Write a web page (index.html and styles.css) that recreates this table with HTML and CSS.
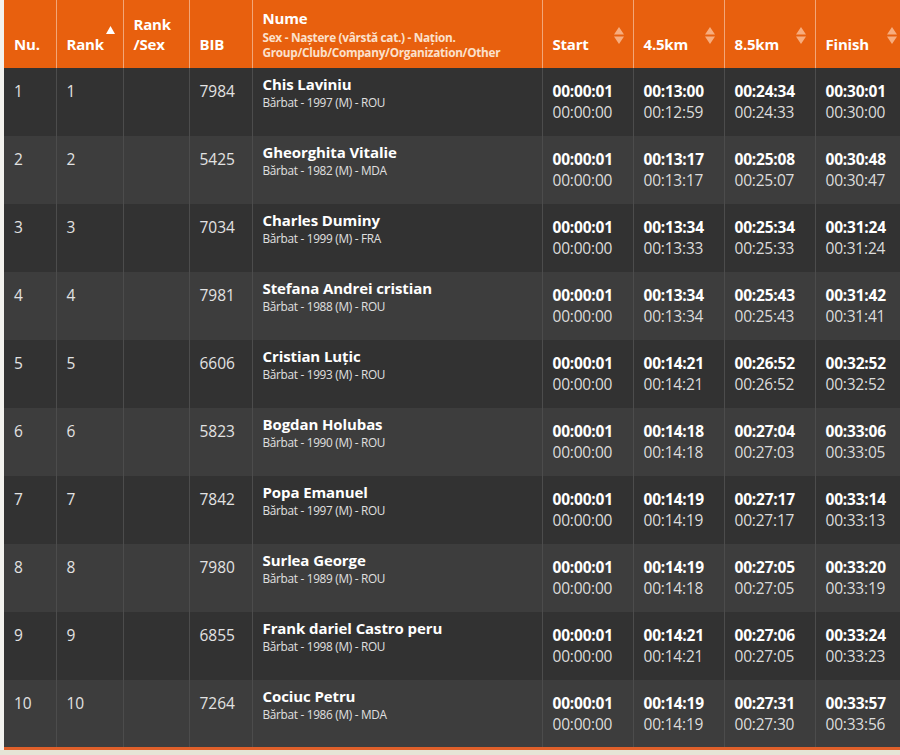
FILE: index.html
```html
<!DOCTYPE html>
<html lang="ro">
<head>
<meta charset="utf-8">
<title>Rezultate</title>
<link rel="stylesheet" href="styles.css">
</head>
<body>
<div class="wrap">
<table class="results">
  <colgroup>
    <col class="c-nu"><col class="c-rank"><col class="c-rs"><col class="c-bib"><col class="c-name">
    <col class="c-t"><col class="c-t"><col class="c-t"><col class="c-t">
  </colgroup>
  <thead>
    <tr>
      <th>Nu.</th>
      <th>Rank<svg class="sort-up" width="9" height="8" viewBox="0 0 9 8"><path d="M4.5 0 L9 8 L0 8 Z" fill="#fff"/></svg></th>
      <th>Rank<br>/Sex</th>
      <th>BIB</th>
      <th class="name-h"><span class="nh">Nume</span><span class="sub">Sex - Naștere (vârstă cat.) - Națion.</span><span class="sub">Group/Club/Company/Organization/Other</span></th>
      <th>Start<svg class="sort-both" width="10" height="17" viewBox="0 0 10 17"><path d="M5 0 L10 7.5 L0 7.5 Z M0 9.5 L10 9.5 L5 17 Z" fill="#f7ad7e"/></svg></th>
      <th>4.5km<svg class="sort-both" width="10" height="17" viewBox="0 0 10 17"><path d="M5 0 L10 7.5 L0 7.5 Z M0 9.5 L10 9.5 L5 17 Z" fill="#f7ad7e"/></svg></th>
      <th>8.5km<svg class="sort-both" width="10" height="17" viewBox="0 0 10 17"><path d="M5 0 L10 7.5 L0 7.5 Z M0 9.5 L10 9.5 L5 17 Z" fill="#f7ad7e"/></svg></th>
      <th>Finish<svg class="sort-both" width="10" height="17" viewBox="0 0 10 17"><path d="M5 0 L10 7.5 L0 7.5 Z M0 9.5 L10 9.5 L5 17 Z" fill="#f7ad7e"/></svg></th>
    </tr>
  </thead>
  <tbody>
    <tr><td>1</td><td>1</td><td></td><td>7984</td><td class="name"><b>Chis Laviniu</b><span>Bărbat - 1997 (M) - ROU</span></td><td class="t"><b>00:00:01</b><span>00:00:00</span></td><td class="t"><b>00:13:00</b><span>00:12:59</span></td><td class="t"><b>00:24:34</b><span>00:24:33</span></td><td class="t"><b>00:30:01</b><span>00:30:00</span></td></tr>
    <tr><td>2</td><td>2</td><td></td><td>5425</td><td class="name"><b>Gheorghita Vitalie</b><span>Bărbat - 1982 (M) - MDA</span></td><td class="t"><b>00:00:01</b><span>00:00:00</span></td><td class="t"><b>00:13:17</b><span>00:13:17</span></td><td class="t"><b>00:25:08</b><span>00:25:07</span></td><td class="t"><b>00:30:48</b><span>00:30:47</span></td></tr>
    <tr><td>3</td><td>3</td><td></td><td>7034</td><td class="name"><b>Charles Duminy</b><span>Bărbat - 1999 (M) - FRA</span></td><td class="t"><b>00:00:01</b><span>00:00:00</span></td><td class="t"><b>00:13:34</b><span>00:13:33</span></td><td class="t"><b>00:25:34</b><span>00:25:33</span></td><td class="t"><b>00:31:24</b><span>00:31:24</span></td></tr>
    <tr><td>4</td><td>4</td><td></td><td>7981</td><td class="name"><b>Stefana Andrei cristian</b><span>Bărbat - 1988 (M) - ROU</span></td><td class="t"><b>00:00:01</b><span>00:00:00</span></td><td class="t"><b>00:13:34</b><span>00:13:34</span></td><td class="t"><b>00:25:43</b><span>00:25:43</span></td><td class="t"><b>00:31:42</b><span>00:31:41</span></td></tr>
    <tr><td>5</td><td>5</td><td></td><td>6606</td><td class="name"><b>Cristian Luțic</b><span>Bărbat - 1993 (M) - ROU</span></td><td class="t"><b>00:00:01</b><span>00:00:00</span></td><td class="t"><b>00:14:21</b><span>00:14:21</span></td><td class="t"><b>00:26:52</b><span>00:26:52</span></td><td class="t"><b>00:32:52</b><span>00:32:52</span></td></tr>
    <tr><td>6</td><td>6</td><td></td><td>5823</td><td class="name"><b>Bogdan Holubas</b><span>Bărbat - 1990 (M) - ROU</span></td><td class="t"><b>00:00:01</b><span>00:00:00</span></td><td class="t"><b>00:14:18</b><span>00:14:18</span></td><td class="t"><b>00:27:04</b><span>00:27:03</span></td><td class="t"><b>00:33:06</b><span>00:33:05</span></td></tr>
    <tr><td>7</td><td>7</td><td></td><td>7842</td><td class="name"><b>Popa Emanuel</b><span>Bărbat - 1997 (M) - ROU</span></td><td class="t"><b>00:00:01</b><span>00:00:00</span></td><td class="t"><b>00:14:19</b><span>00:14:19</span></td><td class="t"><b>00:27:17</b><span>00:27:17</span></td><td class="t"><b>00:33:14</b><span>00:33:13</span></td></tr>
    <tr><td>8</td><td>8</td><td></td><td>7980</td><td class="name"><b>Surlea George</b><span>Bărbat - 1989 (M) - ROU</span></td><td class="t"><b>00:00:01</b><span>00:00:00</span></td><td class="t"><b>00:14:19</b><span>00:14:18</span></td><td class="t"><b>00:27:05</b><span>00:27:05</span></td><td class="t"><b>00:33:20</b><span>00:33:19</span></td></tr>
    <tr><td>9</td><td>9</td><td></td><td>6855</td><td class="name"><b>Frank dariel Castro peru</b><span>Bărbat - 1998 (M) - ROU</span></td><td class="t"><b>00:00:01</b><span>00:00:00</span></td><td class="t"><b>00:14:21</b><span>00:14:21</span></td><td class="t"><b>00:27:06</b><span>00:27:05</span></td><td class="t"><b>00:33:24</b><span>00:33:23</span></td></tr>
    <tr><td>10</td><td>10</td><td></td><td>7264</td><td class="name"><b>Cociuc Petru</b><span>Bărbat - 1986 (M) - MDA</span></td><td class="t"><b>00:00:01</b><span>00:00:00</span></td><td class="t"><b>00:14:19</b><span>00:14:19</span></td><td class="t"><b>00:27:31</b><span>00:27:30</span></td><td class="t"><b>00:33:57</b><span>00:33:56</span></td></tr>
  </tbody>
</table>
</div>
</body>
</html>
```
FILE: styles.css
```css
html, body {
  margin: 0;
  padding: 0;
  background: #e6e4d6;
  overflow: hidden;
}
body {
  font-family: "Open Sans", "DejaVu Sans", sans-serif;
  width: 900px;
  height: 755px;
}
.wrap {
  background: #f3f2ee;
  padding-left: 4px;
  width: 896px;
  overflow: hidden;
}
.results {
  border-collapse: collapse;
  table-layout: fixed;
  width: 902px;
  border-bottom: 3px solid #e0602a;
}
.c-nu { width: 52px; }
.c-rank { width: 67px; }
.c-rs { width: 66px; }
.c-bib { width: 63px; }
.c-name { width: 290px; }
.c-t { width: 91px; }

.results th {
  position: relative;
  height: 68px;
  box-sizing: border-box;
  background: #e8600e;
  color: #fff;
  font-size: 15px;
  font-weight: 700;
  line-height: 20px;
  text-align: left;
  vertical-align: bottom;
  padding: 0 8px 14px 10px;
  border-right: 1px solid #f2a677;
  letter-spacing: -0.2px;
}
.results th.name-h {
  padding-bottom: 8px;
}
.nh {
  display: block;
  line-height: 20px;
  margin-bottom: 2px;
}
.sub {
  display: block;
  font-size: 11.8px;
  line-height: 15px;
  font-weight: 700;
  color: #fbe0cc;
  letter-spacing: -0.3px;
  white-space: nowrap;
}
.sort-up {
  position: absolute;
  right: 8px;
  top: 26px;
}
.sort-both {
  position: absolute;
  right: 9px;
  top: 27px;
}

.results td {
  height: 68px;
  box-sizing: border-box;
  background: #323232;
  color: #e2e2e2;
  font-size: 15.5px;
  line-height: 21px;
  vertical-align: top;
  padding: 13px 8px 0 10px;
  border-right: 1px solid #4c4c4c;
  white-space: nowrap;
}
.results tbody tr:nth-child(even) td {
  background: #3d3d3d;
}
.results td.name {
  padding-top: 6px;
}
.name b {
  display: block;
  font-size: 15px;
  line-height: 20px;
  color: #fff;
  letter-spacing: -0.1px;
}
.name span {
  display: block;
  font-size: 11.8px;
  line-height: 16px;
  color: #e0e0e0;
  letter-spacing: -0.3px;
}
.t b {
  display: block;
  font-size: 15.5px;
  line-height: 21px;
  color: #fff;
  letter-spacing: -0.2px;
}
.t span {
  display: block;
  font-size: 15.5px;
  line-height: 21px;
  color: #dcdcdc;
  letter-spacing: -0.2px;
}
```
